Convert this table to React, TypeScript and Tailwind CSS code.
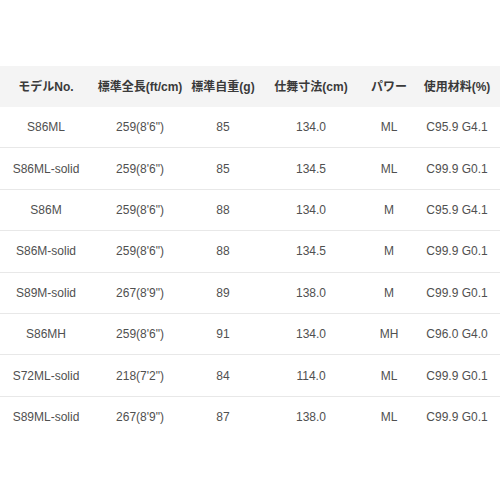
const headers = ["モデルNo.", "標準全長(ft/cm)", "標準自重(g)", "仕舞寸法(cm)", "パワー", "使用材料(%)"];

const rows = [
  ["S86ML", "259(8'6\")", "85", "134.0", "ML", "C95.9 G4.1"],
  ["S86ML-solid", "259(8'6\")", "85", "134.5", "ML", "C99.9 G0.1"],
  ["S86M", "259(8'6\")", "88", "134.0", "M", "C95.9 G4.1"],
  ["S86M-solid", "259(8'6\")", "88", "134.5", "M", "C99.9 G0.1"],
  ["S89M-solid", "267(8'9\")", "89", "138.0", "M", "C99.9 G0.1"],
  ["S86MH", "259(8'6\")", "91", "134.0", "MH", "C96.0 G4.0"],
  ["S72ML-solid", "218(7'2\")", "84", "114.0", "ML", "C99.9 G0.1"],
  ["S89ML-solid", "267(8'9\")", "87", "138.0", "ML", "C99.9 G0.1"],
];

const cols = "grid grid-cols-[92px_96px_70px_106px_50px_86px]";

export default function App() {
  return (
    <div
      className="w-[500px] h-[500px] bg-white pt-[66px] overflow-hidden"
      style={{ fontFamily: '"Liberation Sans", Arial, "Noto Sans CJK JP", sans-serif' }}
    >
      {/* Header */}
      <div className={`${cols} h-[41px] items-center bg-[#f4f4f4] text-[12px] font-bold text-[#3a3a3a]`}>
        {headers.map((h) => (
          <div key={h} className="text-center whitespace-nowrap">
            {h}
          </div>
        ))}
      </div>

      {/* Body */}
      {rows.map((r, i) => (
        <div
          key={r[0]}
          className={`${cols} h-[41.4px] items-center text-[12px] text-[#505050] ${
            i < rows.length - 1 ? "border-b border-[#e8e8e8]" : ""
          }`}
        >
          {r.map((c, j) => (
            <div key={j} className="text-center whitespace-nowrap">
              {c}
            </div>
          ))}
        </div>
      ))}
    </div>
  );
}
